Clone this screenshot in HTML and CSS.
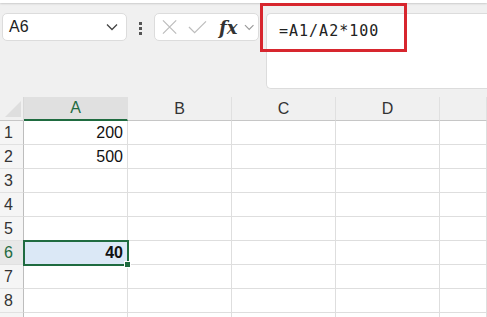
FILE: index.html
```html
<!DOCTYPE html>
<html lang="en">
<head>
    <meta charset="UTF-8">
    <title>Formula</title>
    <link rel="stylesheet" href="styles.css">
</head>
<body>

<div class="ribbon-edge"></div>

<!-- Formula bar -->
<div class="toolbar">
    <div class="name-box">
        <span>A6</span>
        <svg width="12" height="8" viewBox="0 0 12 8"><path d="M1 1.5 L6 6.5 L11 1.5" fill="none" stroke="#444" stroke-width="1.3"/></svg>
    </div>
    <div class="dots"><i></i><i></i><i></i></div>
    <div class="func-box">
        <svg width="16" height="16" viewBox="0 0 16 16"><path d="M1 1 L15 15 M15 1 L1 15" stroke="#bdbdbd" stroke-width="1.3"/></svg>
        <svg width="20" height="16" viewBox="0 0 20 16"><path d="M1 8 L7 14 L19 2" fill="none" stroke="#bdbdbd" stroke-width="1.3"/></svg>
        <span class="fx">fx</span>
        <svg width="11" height="7" viewBox="0 0 11 7"><path d="M1 1 L5.5 5.5 L10 1" fill="none" stroke="#9a9a9a" stroke-width="1.2"/></svg>
    </div>
    <div class="formula-box">
        <span class="formula">=A1/A2*100</span>
        <div class="highlight"></div>
    </div>
</div>

<!-- Sheet -->
<div class="sheet">
    <div class="corner"><div class="tri"></div></div>
    <div class="col-head active">A</div>
    <div class="col-head">B</div>
    <div class="col-head">C</div>
    <div class="col-head">D</div>
    <div class="col-head"></div>

    <div class="row-head">1</div><div class="cell">200</div><div class="cell"></div><div class="cell"></div><div class="cell"></div><div class="cell"></div>
    <div class="row-head">2</div><div class="cell">500</div><div class="cell"></div><div class="cell"></div><div class="cell"></div><div class="cell"></div>
    <div class="row-head">3</div><div class="cell"></div><div class="cell"></div><div class="cell"></div><div class="cell"></div><div class="cell"></div>
    <div class="row-head">4</div><div class="cell"></div><div class="cell"></div><div class="cell"></div><div class="cell"></div><div class="cell"></div>
    <div class="row-head">5</div><div class="cell"></div><div class="cell"></div><div class="cell"></div><div class="cell"></div><div class="cell"></div>
    <div class="row-head active">6</div><div class="cell selected"><b>40</b><span class="handle"></span></div><div class="cell"></div><div class="cell"></div><div class="cell"></div><div class="cell"></div>
    <div class="row-head">7</div><div class="cell"></div><div class="cell"></div><div class="cell"></div><div class="cell"></div><div class="cell"></div>
    <div class="row-head">8</div><div class="cell"></div><div class="cell"></div><div class="cell"></div><div class="cell"></div><div class="cell"></div>
    <div class="row-head"></div><div class="cell"></div><div class="cell"></div><div class="cell"></div><div class="cell"></div><div class="cell"></div>
</div>

</body>
</html>
```

FILE: styles.css
```css
body {
    margin: 0;
    background: #f0f0f0;
    font-family: "Liberation Sans", Arial, sans-serif;
    color: #222;
    overflow: hidden;
}

.ribbon-edge {
    height: 3px;
    background: #fff;
    box-shadow: 0 1px 2px rgba(0, 0, 0, 0.15);
}

.toolbar {
    display: flex;
    align-items: flex-start;
    height: 94px;
    padding: 10px 0 0 2px;
    box-sizing: border-box;
}

.name-box {
    display: flex;
    align-items: center;
    justify-content: space-between;
    width: 125px;
    height: 28px;
    box-sizing: border-box;
    padding: 0 8px 0 6px;
    background: #fff;
    border: 1px solid #dcdcdc;
    border-radius: 5px;
    font-size: 16px;
}

.dots {
    display: flex;
    flex-direction: column;
    gap: 2px;
    margin: 9px 12px 0 12px;
}

.dots i {
    width: 3px;
    height: 3px;
    background: #555;
}

.func-box {
    display: flex;
    align-items: center;
    gap: 11px;
    width: 105px;
    height: 28px;
    box-sizing: border-box;
    padding: 0 4px 0 7px;
    background: #fff;
    border: 1px solid #dcdcdc;
    border-radius: 5px;
}

.fx {
    font-family: "DejaVu Serif", serif;
    font-style: italic;
    font-weight: bold;
    font-size: 18px;
    color: #333;
    margin-left: 1px;
    margin-right: -5px;
}

.formula-box {
    position: relative;
    flex: 1;
    height: 76px;
    margin-left: 7px;
    box-sizing: border-box;
    padding: 8px 0 0 12px;
    background: #fff;
    border: 1px solid #dcdcdc;
    border-right: none;
    border-radius: 5px 0 0 5px;
}

.formula {
    font-family: "DejaVu Sans Mono", monospace;
    font-size: 15px;
    letter-spacing: 1px;
    color: #222;
}

.highlight {
    position: absolute;
    left: -7px;
    top: -11px;
    width: 147px;
    height: 49px;
    box-sizing: border-box;
    border: 3px solid #d7262e;
}

.sheet {
    display: grid;
    grid-template-columns: 24px 104px 104px 104px 104px 1fr;
    grid-auto-rows: 24px;
    background: #fff;
}

.corner {
    position: relative;
    background: #f0f0f0;
    border-right: 1px solid #d8d8d8;
    border-bottom: 1px solid #c6c6c6;
}

.tri {
    position: absolute;
    right: 2px;
    bottom: 3px;
    width: 0;
    height: 0;
    border-left: 16px solid transparent;
    border-bottom: 16px solid #dedede;
}

.col-head {
    display: flex;
    align-items: center;
    justify-content: center;
    background: #f0f0f0;
    border-right: 1px solid #e0e0e0;
    border-bottom: 1px solid #c6c6c6;
    font-size: 16px;
    color: #333;
}

.col-head.active {
    background: #e0e0e0;
    color: #1f6b40;
    border-bottom: 2px solid #1f6b40;
}

.row-head {
    display: flex;
    align-items: center;
    padding-left: 4px;
    background: #f5f5f5;
    border-right: 1px solid #bdbdbd;
    border-bottom: 1px solid #e1e1e1;
    font-size: 16px;
    color: #333;
}

.row-head.active {
    background: #e8e8e8;
    color: #1f6b40;
}

.cell {
    position: relative;
    display: flex;
    align-items: center;
    justify-content: flex-end;
    padding-right: 4px;
    border-right: 1px solid #dedede;
    border-bottom: 1px solid #dedede;
    font-size: 16px;
    color: #111;
}

.cell.selected {
    background: #dbe8f6;
    outline: 2px solid #1f6b40;
    outline-offset: -1px;
    z-index: 1;
}

.handle {
    position: absolute;
    right: -4px;
    bottom: -4px;
    width: 5px;
    height: 5px;
    background: #1f6b40;
    border: 1px solid #fff;
}
```
